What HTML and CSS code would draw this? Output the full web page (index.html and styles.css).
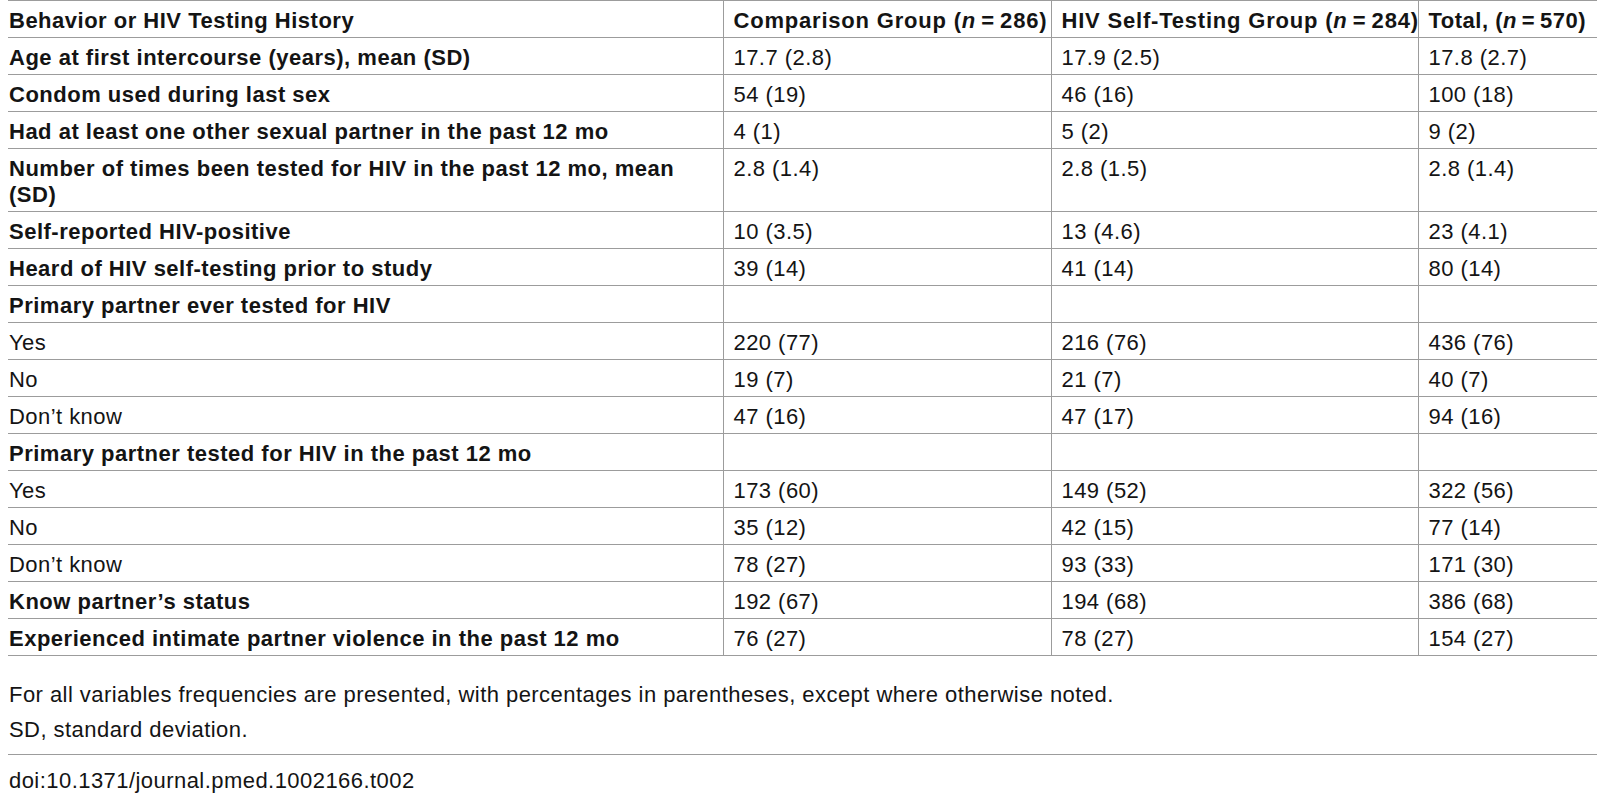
FILE: index.html
```html
<!DOCTYPE html>
<html lang="en">
<head>
<meta charset="utf-8">
<title>Table 2</title>
<link rel="stylesheet" href="styles.css">
</head>
<body>
<div class="wrap">
  <table class="data">
    <colgroup>
      <col class="c1"><col class="c2"><col class="c3"><col class="c4">
    </colgroup>
    <thead>
      <tr>
        <th>Behavior or HIV Testing History</th>
        <th class="grp">Comparison Group (<i>n</i>&#8201;=&#8201;286)</th>
        <th class="grp">HIV Self-Testing Group (<i>n</i>&#8201;=&#8201;284)</th>
        <th>Total, (<i>n</i>&#8201;=&#8201;570)</th>
      </tr>
    </thead>
    <tbody>
      <tr><td class="b">Age at first intercourse (years), mean (SD)</td><td>17.7 (2.8)</td><td>17.9 (2.5)</td><td>17.8 (2.7)</td></tr>
      <tr><td class="b">Condom used during last sex</td><td>54 (19)</td><td>46 (16)</td><td>100 (18)</td></tr>
      <tr><td class="b">Had at least one other sexual partner in the past 12 mo</td><td>4 (1)</td><td>5 (2)</td><td>9 (2)</td></tr>
      <tr><td class="b">Number of times been tested for HIV in the past 12 mo, mean (SD)</td><td>2.8 (1.4)</td><td>2.8 (1.5)</td><td>2.8 (1.4)</td></tr>
      <tr><td class="b">Self-reported HIV-positive</td><td>10 (3.5)</td><td>13 (4.6)</td><td>23 (4.1)</td></tr>
      <tr><td class="b">Heard of HIV self-testing prior to study</td><td>39 (14)</td><td>41 (14)</td><td>80 (14)</td></tr>
      <tr><td class="b">Primary partner ever tested for HIV</td><td></td><td></td><td></td></tr>
      <tr><td>Yes</td><td>220 (77)</td><td>216 (76)</td><td>436 (76)</td></tr>
      <tr><td>No</td><td>19 (7)</td><td>21 (7)</td><td>40 (7)</td></tr>
      <tr><td>Don’t know</td><td>47 (16)</td><td>47 (17)</td><td>94 (16)</td></tr>
      <tr><td class="b">Primary partner tested for HIV in the past 12 mo</td><td></td><td></td><td></td></tr>
      <tr><td>Yes</td><td>173 (60)</td><td>149 (52)</td><td>322 (56)</td></tr>
      <tr><td>No</td><td>35 (12)</td><td>42 (15)</td><td>77 (14)</td></tr>
      <tr><td>Don’t know</td><td>78 (27)</td><td>93 (33)</td><td>171 (30)</td></tr>
      <tr><td class="b">Know partner’s status</td><td>192 (67)</td><td>194 (68)</td><td>386 (68)</td></tr>
      <tr><td class="b">Experienced intimate partner violence in the past 12 mo</td><td>76 (27)</td><td>78 (27)</td><td>154 (27)</td></tr>
    </tbody>
  </table>
  <div class="notes">
    <p>For all variables frequencies are presented, with percentages in parentheses, except where otherwise noted.</p>
    <p>SD, standard deviation.</p>
  </div>
  <div class="doi">doi:10.1371/journal.pmed.1002166.t002</div>
</div>
</body>
</html>
```
FILE: styles.css
```css
html, body {
  margin: 0;
  padding: 0;
  background: #ffffff;
}

body {
  font-family: "Liberation Sans", Arial, sans-serif;
  font-size: 22px;
  letter-spacing: 0.45px;
  color: #141414;
}

.wrap {
  width: 1589px;
  padding-left: 8px;
}

.data {
  width: 1589px;
  table-layout: fixed;
  border-collapse: collapse;
  border-top: 1px solid #9c9c9c;
}

.c1 { width: 715px; }
.c2 { width: 328px; }
.c3 { width: 367px; }
.c4 { width: 179px; }

.data th,
.data td {
  text-align: left;
  vertical-align: top;
  line-height: 26px;
  padding: 7px 4px 3px 10px;
  border-bottom: 1px solid #9c9c9c;
  border-left: 1px solid #9c9c9c;
}

.data th {
  font-weight: bold;
  white-space: nowrap;
  letter-spacing: 0.5px;
}

.data th.grp {
  letter-spacing: 0.8px;
}

.data th:first-child,
.data td:first-child {
  border-left: none;
  padding-left: 1px;
}

.data td.b {
  font-weight: bold;
  letter-spacing: 0.5px;
}

.notes {
  padding: 21px 0 7px 1px;
  border-bottom: 1px solid #9c9c9c;
}

.notes p {
  margin: 0;
  line-height: 35px;
}

.doi {
  padding: 8px 0 0 1px;
  line-height: 35px;
}
```
